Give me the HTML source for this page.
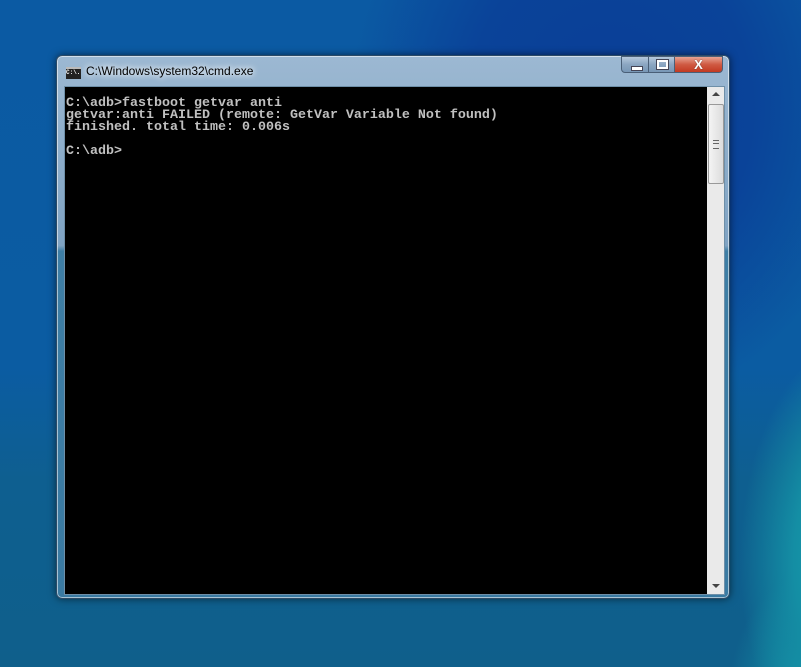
<!DOCTYPE html>
<html><head><style>
body{margin:0;width:801px;height:667px;overflow:hidden;position:relative;
background:radial-gradient(ellipse 120px 220px at 860px 560px,#1ba6b2 0%,#148ea4 55%,rgba(16,100,150,0) 100%),
radial-gradient(ellipse 90px 120px at 820px 690px,#16a0ad 0%,rgba(16,100,150,0) 100%),
radial-gradient(ellipse 260px 300px at 610px 110px,#0a3e97 0%,#0a4399 55%,rgba(10,80,160,0) 100%),
linear-gradient(180deg,#0b5aa3 0%,#0b5ca2 55%,#0e5f90 72%,#0f5f8b 100%);}
.win{position:absolute;left:56px;top:55px;width:674px;height:544px;border-radius:6px;
background:linear-gradient(180deg,#9cb8d2 0%,#7fa3c3 35%,#3e7ea5 36%,#3a7aa2 100%);
box-shadow:0 0 8px rgba(0,0,0,.55),inset 0 0 0 1px rgba(255,255,255,.55);border:1px solid #2b4a66;box-sizing:border-box;}
.title{position:absolute;left:29px;top:8px;font:12px "Liberation Sans",sans-serif;color:#000;text-shadow:0 0 8px #fff,0 0 6px #fff;}
.icon{position:absolute;left:9px;top:11px;width:15px;height:10px;background:#222;border-top:2px solid #bbb;font:bold 6px "Liberation Mono",monospace;color:#fff;line-height:8px;}
.cons{position:absolute;left:7px;top:30px;width:643px;height:507px;background:#000;border:1px solid #6e8fa8;}
.txt{position:absolute;left:1px;top:11px;margin:0;font:bold 13.33px/12px "Liberation Mono",monospace;color:#c0c0c0;}
.sb{position:absolute;left:650px;top:30px;width:17px;height:507px;background:#eaeaea;border:1px solid #6e8fa8;border-left:none;}
.thumb{position:absolute;left:1px;top:17px;width:14px;height:78px;border:1px solid #999;border-radius:2px;background:linear-gradient(90deg,#f4f4f4,#dcdcdc);}
.btn{position:absolute;top:0;height:17px;border:1px solid #4a5f77;box-sizing:border-box;}
</style></head><body>
<div class="win">
<div class="icon">C:\.</div>
<div class="title">C:\Windows\system32\cmd.exe</div>
<div class="btn" style="left:564px;width:28px;border-radius:0 0 0 4px;background:linear-gradient(#b6c9dc,#8ba6c1 50%,#7897b6)"><div style="position:absolute;left:9px;top:9px;width:10px;height:3px;background:#fff;border:1px solid #445"></div></div>
<div class="btn" style="left:591px;width:27px;background:linear-gradient(#b6c9dc,#8ba6c1 50%,#7897b6)"><div style="position:absolute;left:8px;top:3px;width:7px;height:5px;border:2px solid #fff;outline:1px solid #445"></div></div>
<div class="btn" style="left:617px;width:49px;border-radius:0 0 4px 0;background:linear-gradient(#e8a493,#cf5a43 50%,#c23a22);color:#fff;font:bold 13px/15px 'Liberation Sans',sans-serif;text-align:center;text-shadow:0 0 1px #333">X</div>
<div class="cons"><pre class="txt">C:\adb>fastboot getvar anti
getvar:anti FAILED (remote: GetVar Variable Not found)
finished. total time: 0.006s

C:\adb></pre></div>
<div class="sb"><div style="position:absolute;left:5px;top:5px;border:4px solid transparent;border-bottom:4px solid #444;border-top:none;width:0"></div><div class="thumb"><div style="position:absolute;left:4px;top:35px;width:6px;height:7px;border-top:1px solid #666;border-bottom:1px solid #666;"><div style="margin-top:2px;border-top:1px solid #666;height:0"></div></div></div><div style="position:absolute;left:5px;bottom:6px;border:4px solid transparent;border-top:4px solid #444;border-bottom:none;width:0"></div></div>
</div>
</body></html>
